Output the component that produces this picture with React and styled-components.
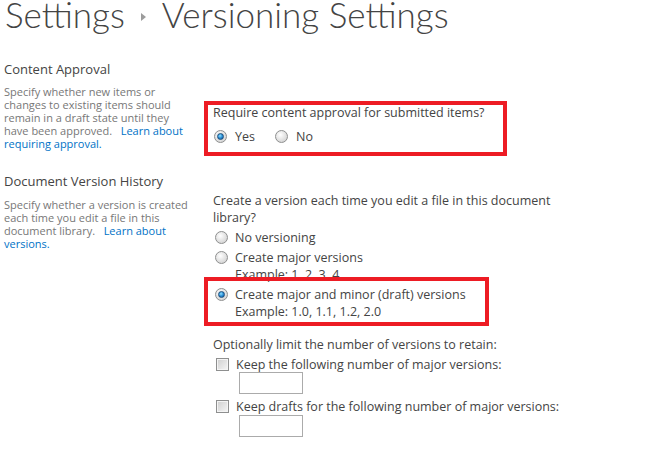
import React from "react";
import styled, { createGlobalStyle } from "styled-components";

const GlobalStyle = createGlobalStyle`
  body {
    margin: 0;
    background: #fff;
    font-family: "Open Sans", "Noto Sans", sans-serif;
    color: #444;
  }
`;

const Page = styled.div`
  padding-left: 4px;
  width: 653px;
  height: 455px;
  overflow: hidden;
`;

const TitleBar = styled.h1`
  display: flex;
  align-items: flex-start;
  height: 45px;
  margin: 0 0 0 1px;
  font-family: "Lato", "Open Sans", sans-serif;
  font-weight: 300;
  font-size: 35px;
  line-height: 28px;
  color: #444;
  white-space: nowrap;
`;

const Crumb = styled.span`
  display: inline-flex;
  justify-content: center;
  width: 37px;
  padding-top: 13px;
`;

const Section = styled.div`
  display: grid;
  grid-template-columns: 209px 1fr;
  padding-top: ${(p) => p.$top}px;
`;

const Info = styled.div`
  display: flex;
  flex-direction: column;
  gap: ${(p) => p.$gap}px;
`;

const InfoTitle = styled.div`
  font-size: 13px;
  line-height: 17px;
  color: #444;
`;

const InfoText = styled.div`
  font-size: 11px;
  line-height: 13px;
  color: #777;
  white-space: nowrap;
`;

const Link = styled.a`
  color: #0072c6;
  text-decoration: none;
`;

const Control = styled.div`
  display: flex;
  flex-direction: column;
  padding-top: ${(p) => p.$top}px;
  font-size: 12.5px;
  color: #444;
`;

const Question = styled.div`
  line-height: 17px;
  margin-top: ${(p) => p.$mt || 0}px;
  white-space: nowrap;
`;

const Marked = styled.div`
  position: relative;
`;

const Marker = styled.div`
  position: absolute;
  top: ${(p) => p.$top}px;
  left: -9px;
  width: ${(p) => p.$w}px;
  height: ${(p) => p.$h}px;
  box-sizing: border-box;
  border: 4px solid #ed1c24;
  pointer-events: none;
`;

const InlineChoices = styled.div`
  display: flex;
  align-items: center;
  gap: 19px;
  margin-top: 7px;
  height: 17px;
`;

const Choice = styled.label`
  display: flex;
  align-items: center;
  gap: ${(p) => p.$gap || 8}px;
  height: 18px;
  margin-top: ${(p) => p.$mt || 0}px;
  padding-left: ${(p) => p.$indent || 1}px;
  white-space: nowrap;
`;

const Radio = styled.span`
  position: relative;
  width: 13px;
  height: 13px;
  box-sizing: border-box;
  border-radius: 50%;
  border: 1px solid #8e8f8f;
  background: radial-gradient(circle at 40% 35%, #ffffff 0%, #e6e6e6 45%, #c9c9c9 100%);
  flex: none;

  &::after {
    content: "";
    display: ${(p) => (p.$checked ? "block" : "none")};
    position: absolute;
    left: 2px;
    top: 2px;
    width: 7px;
    height: 7px;
    box-sizing: border-box;
    border-radius: 50%;
    border: 1px solid #1d4f7c;
    background: radial-gradient(circle at 40% 35%, #8fe0ff 0%, #2b8fd6 50%, #0d4f8f 100%);
  }
`;

const Check = styled.span`
  width: 13px;
  height: 13px;
  box-sizing: border-box;
  border: 1px solid #8e8f8f;
  box-shadow: inset 0 0 0 1px #f4f4f4;
  background: linear-gradient(135deg, #cfcfcf 0%, #e6e6e6 60%, #f6f6f6 100%);
  flex: none;
`;

const Example = styled.div`
  line-height: 18px;
  padding-left: ${(p) => p.$indent}px;
  white-space: nowrap;
`;

const NumberBox = styled.input`
  display: block;
  width: 64px;
  height: 22px;
  box-sizing: border-box;
  margin: ${(p) => p.$mt}px 0 0 26px;
  border: 1px solid #ababab;
  background: #fff;
  padding: 0 3px;
  font: inherit;
  outline: none;
`;

function Arrow() {
  return (
    <svg width="5" height="8" viewBox="0 0 5 8">
      <path d="M0 0 L5 4 L0 8 Z" fill="#9c9c9c" />
    </svg>
  );
}

const gap = "\u00a0\u00a0 ";

export default function App() {
  return (
    <Page>
      <GlobalStyle />
      <TitleBar>
        Settings
        <Crumb>
          <Arrow />
        </Crumb>
        Versioning Settings
      </TitleBar>

      <Section $top={16}>
        <Info $gap={7}>
          <InfoTitle>Content Approval</InfoTitle>
          <InfoText>
            Specify whether new items or
            <br />
            changes to existing items should
            <br />
            remain in a draft state until they
            <br />
            have been approved.{gap}
            <Link href="#">Learn about</Link>
            <br />
            <Link href="#">requiring approval.</Link>
          </InfoText>
        </Info>
        <Control $top={43}>
          <Marked>
            <Marker $top={-3} $w={303} $h={55} />
            <Question>Require content approval for submitted items?</Question>
            <InlineChoices>
              <Choice>
                <Radio $checked />
                Yes
              </Choice>
              <Choice>
                <Radio />
                No
              </Choice>
            </InlineChoices>
          </Marked>
        </Control>
      </Section>

      <Section $top={23}>
        <Info $gap={8}>
          <InfoTitle>Document Version History</InfoTitle>
          <InfoText>
            Specify whether a version is created
            <br />
            each time you edit a file in this
            <br />
            document library.{gap}
            <Link href="#">Learn about</Link>
            <br />
            <Link href="#">versions.</Link>
          </InfoText>
        </Info>
        <Control $top={19}>
          <Question>
            Create a version each time you edit a file in this document
            <br />
            library?
          </Question>
          <Choice $mt={2} $indent={2} $gap={7}>
            <Radio />
            No versioning
          </Choice>
          <Choice $mt={2} $indent={2} $gap={7}>
            <Radio />
            Create major versions
          </Choice>
          <Example $indent={22}>Example: 1, 2, 3, 4</Example>
          <Marked>
            <Marker $top={-7} $w={285} $h={49} />
            <Choice $mt={1} $indent={2} $gap={7}>
              <Radio $checked />
              Create major and minor (draft) versions
            </Choice>
            <Example $indent={22}>Example: 1.0, 1.1, 1.2, 2.0</Example>
          </Marked>
          <Question $mt={15}>
            Optionally limit the number of versions to retain:
          </Question>
          <Choice $mt={2} $indent={3} $gap={7}>
            <Check />
            Keep the following number of major versions:
          </Choice>
          <NumberBox $mt={-1} />
          <Choice $mt={3} $indent={3} $gap={7}>
            <Check />
            Keep drafts for the following number of major versions:
          </Choice>
          <NumberBox $mt={0} />
        </Control>
      </Section>
    </Page>
  );
}
